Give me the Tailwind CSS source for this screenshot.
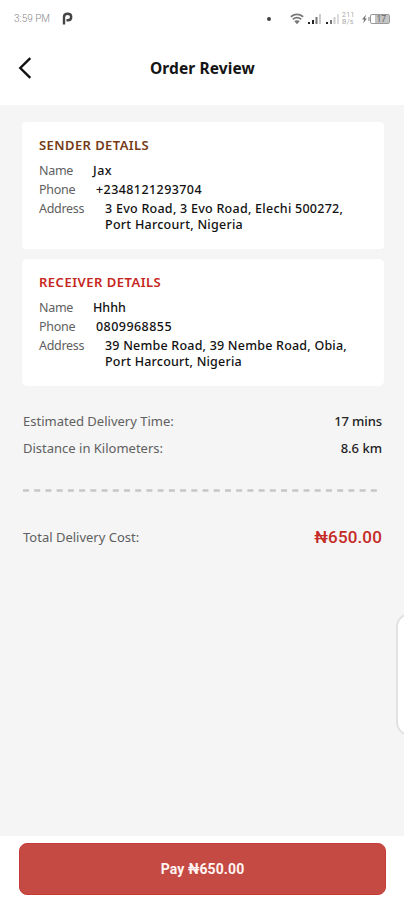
<!DOCTYPE html>
<html lang="en">
<head>
<meta charset="utf-8">
<title>Order Review</title>
<script src="https://cdn.jsdelivr.net/npm/@tailwindcss/browser@4"></script>
</head>
<body class="bg-[#f5f5f5]">
<div class="relative flex h-[900px] w-[404px] flex-col overflow-hidden bg-[#f5f5f5] font-['Noto_Sans',sans-serif] text-[12.5px] leading-4 text-[#606060]">
  <header class="h-[105px] shrink-0 bg-white">
    <div class="flex h-[37px] items-center pl-[14px] pr-[13px]">
      <span class="w-12 whitespace-nowrap font-[Roboto] text-[10px] font-light text-[#888]">3:59 PM</span>
      <svg class="h-[13px] w-[11px]" viewBox="0 0 11 13" fill="none" stroke="#444" stroke-width="2.400"><path d="M2 12.600V5.200Q2 1.800 5.600 1.800Q9.200 1.800 9.200 5Q9.200 8.300 5.800 8.300H4.500"/></svg>
      <div class="ml-auto flex items-center">
        <span class="mr-[19px] size-[4px] rounded-full bg-[#444]"></span>
        <svg class="h-[12px] w-[14px]" viewBox="0 0 14 12" fill="none" stroke="#777" stroke-width="1.700"><path d="M.8 3.700Q7-.8 13.200 3.700M2.800 6.200Q7 3 11.200 6.200"/><path d="M4.200 8Q7 6.300 9.800 8L7 11.200Z" fill="#777" stroke="none"/></svg>
        <svg class="ml-[4px] h-[12px] w-[34px]" viewBox="0 0 34 12"><path d="M0 9h2v2H0zM4 7h2v4H4zM18 9h2v2h-2z" fill="#222"/><path d="M7.500 4h2v7h-2zM22 7h2v4h-2z" fill="#777"/><path d="M11 1h2v10h-2zM25.500 4h2v7h-2z" fill="#ccc"/><path d="M29 1h2v10h-2z" fill="#ddd"/></svg>
        <span class="w-[14px] font-[Roboto] text-[7px] leading-[7px] tracking-[0.3px] text-[#aaa]">211<br>B/s</span>
        <svg class="ml-[5px] h-[12px] w-[30px]" viewBox="0 0 30 12"><path d="M5 1.500L1 6.500h2.200L2 10.500l4-5H4z" fill="#777"/><path d="M7 4h2v4H7z" fill="#bbb"/><rect x="9.500" y="1.500" width="19" height="9" rx="1.500" fill="#fff" stroke="#999"/><path d="M14 2h14v8H14z" fill="#c4c4c4"/><text x="15.500" y="9" font-size="8.500" font-family="Roboto" fill="#666">17</text></svg>
      </div>
    </div>
    <div class="flex h-[62px] items-center pl-[18px]">
      <svg class="h-[22px] w-[14px]" viewBox="0 0 14 22" fill="none" stroke="#111" stroke-width="2.400"><path d="M12.300 1.200L2.300 11L12.300 20.800"/></svg>
      <h1 class="ml-[118px] text-[15.500px] font-bold leading-5 tracking-[0.1px] text-[#151515]">Order Review</h1>
    </div>
  </header>

  <main class="flex flex-1 flex-col pt-[17px]">
    <section class="ml-[22px] h-[127px] w-[362px] rounded-[4px] bg-white pl-[17px] pt-[15px]">
      <h2 class="text-[13px] font-semibold tracking-[0.42px] text-[#753a17]">SENDER DETAILS</h2>
      <dl class="mt-[10px] flex flex-col gap-[3px]">
        <div class="flex"><dt class="w-[54px] tracking-[-0.3px]">Name</dt><dd class="font-medium tracking-[0.5px] text-[#111]">Jax</dd></div>
        <div class="flex"><dt class="w-[57px] tracking-[-0.3px]">Phone</dt><dd class="font-medium tracking-[0.42px] text-[#111]">+2348121293704</dd></div>
        <div class="flex"><dt class="w-[66px] tracking-[-0.3px]">Address</dt><dd class="whitespace-nowrap font-medium tracking-[0.26px] text-[#111]">3 Evo Road, 3 Evo Road, Elechi 500272,<br>Port Harcourt, Nigeria</dd></div>
      </dl>
    </section>
    <section class="ml-[22px] mt-[10px] h-[127px] w-[362px] rounded-[5px] bg-white pl-[17px] pt-[15px]">
      <h2 class="text-[13px] font-semibold tracking-[0.5px] text-[#c62520]">RECEIVER DETAILS</h2>
      <dl class="mt-[10px] flex flex-col gap-[3px]">
        <div class="flex"><dt class="w-[54px] tracking-[-0.3px]">Name</dt><dd class="font-medium text-[#111]">Hhhh</dd></div>
        <div class="flex"><dt class="w-[57px] tracking-[-0.3px]">Phone</dt><dd class="font-medium tracking-[0.45px] text-[#111]">0809968855</dd></div>
        <div class="flex"><dt class="w-[66px] tracking-[-0.3px]">Address</dt><dd class="whitespace-nowrap font-medium tracking-[0.21px] text-[#111]">39 Nembe Road, 39 Nembe Road, Obia,<br>Port Harcourt, Nigeria</dd></div>
      </dl>
    </section>
    <div class="mt-[27px] flex flex-col gap-[11px] pl-[23px] pr-[22px] text-[13px]">
      <div class="flex justify-between"><span>Estimated Delivery Time:</span><span class="font-medium tracking-[-0.1px] text-[#222]">17 mins</span></div>
      <div class="flex justify-between"><span>Distance in Kilometers:</span><span class="font-medium text-[#222]">8.6 km</span></div>
    </div>
    <svg class="ml-[23px] mt-[33px] h-[3px] w-[355px]" viewBox="0 0 355 3"><path d="M0 1.500H355" stroke="#c6c6c6" stroke-width="2.400" stroke-dasharray="6 5.220"/></svg>
    <div class="mt-[35px] flex h-5 items-center justify-between pl-[23px] pr-[22px] text-[13px]"><span>Total Delivery Cost:</span><span class="font-[Roboto] text-[17px] font-medium tracking-[0.15px] text-[#c52b27]">₦650.00</span></div>
  </main>

  <footer class="h-[64px] shrink-0 bg-white pl-[19px] pt-[7px]">
    <button class="flex h-[52px] w-[367px] items-center justify-center rounded-[8px] border border-[#c53c36] bg-[#c54a43] font-[Roboto] text-[14px] font-bold tracking-[0.1px] text-[#fff4f2]">Pay ₦650.00</button>
  </footer>
  <div class="absolute left-[396px] top-[613px] h-[123px] w-[30px] rounded-[14px] border-2 border-[#e2e2e2] bg-white"></div>
</div>
</body>
</html>
